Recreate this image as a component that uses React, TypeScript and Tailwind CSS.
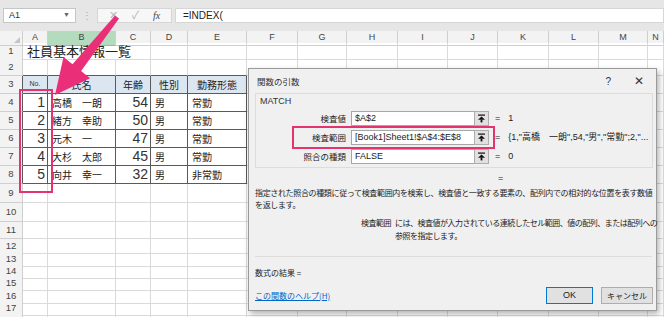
import React from "react";

const tpl =
  "grid grid-cols-[23px_25px_68px_35px_37px_59px_51px_49px_51px_50px_50px_51px_50px_49px_1fr]";

const colLetters = ["A", "B", "C", "D", "E", "F", "G", "H", "I", "J", "K", "L", "M", "N"];

const rows = [
  { n: 1, h: "h-[16px]" },
  { n: 2, h: "h-[17px]" },
  { n: 3, h: "h-[18px]" },
  { n: 4, h: "h-[18px]" },
  { n: 5, h: "h-[18px]" },
  { n: 6, h: "h-[18px]" },
  { n: 7, h: "h-[18px]" },
  { n: 8, h: "h-[18px]" },
  { n: 9, h: "h-[19px]" },
  { n: 10, h: "h-[19px]" },
  { n: 11, h: "h-[17px]" },
  { n: 12, h: "h-[13px]" },
  { n: 13, h: "h-[12px]" },
  { n: 14, h: "h-[12px]" },
  { n: 15, h: "h-[13px]" },
  { n: 16, h: "h-[12px]" },
  { n: 17, h: "h-[12px]" },
  { n: 18, h: "h-[12px]" },
];

const table: Record<number, string[]> = {
  3: ["No.", "氏名", "年齢", "性別", "勤務形態"],
  4: ["1", "高橋　一朗", "54", "男", "常勤"],
  5: ["2", "緒方　幸助", "50", "男", "常勤"],
  6: ["3", "元木　一", "47", "男", "常勤"],
  7: ["4", "大杉　太郎", "45", "男", "常勤"],
  8: ["5", "向井　幸一", "32", "男", "非常勤"],
};

const jp = "font-['Noto_Sans_CJK_JP',sans-serif]";
const lat = "font-['Liberation_Sans','Noto_Sans_CJK_JP',sans-serif]";

function Cell({ r, c }: { r: number; c: number }) {
  const data = table[r];
  if (data && c >= 1 && c <= 5) {
    const v = data[c - 1];
    if (r === 3) {
      return (
        <div className="bg-[#dce6f1] border-r border-b border-[#5a5a5a] flex items-center justify-center">
          {c === 1 ? (
            <span className={`${lat} text-[7px] text-[#333]`}>{v}</span>
          ) : (
            <span className={`${jp} text-[10px] text-[#222]`}>{v}</span>
          )}
        </div>
      );
    }
    const right = c === 1 || c === 3;
    return (
      <div
        className={`border-r border-b border-[#5a5a5a] flex items-end pb-[1px] ${
          right ? "justify-end pr-[2px]" : "pl-[4px]"
        }`}
      >
        {right ? (
          <span className={`${lat} text-[14px] leading-[15px] text-[#333]`}>{v}</span>
        ) : (
          <span className={`${jp} text-[10px] leading-[14px] text-[#222] whitespace-pre`}>{v}</span>
        )}
      </div>
    );
  }
  if (r === 1 && c === 1) {
    return (
      <div className="border-b border-[#dadada] flex items-end pl-[4px] pb-[1px] whitespace-nowrap">
        <span className={`${jp} text-[13px] leading-[15px] text-[#222]`}>社員基本情報一覧</span>
      </div>
    );
  }
  if (r === 1 && c === 2) {
    return <div className="border-b border-[#dadada]" />;
  }
  if (r === 2 && c >= 1 && c <= 5) {
    return <div className="border-r border-b border-r-[#dadada] border-b-[#5a5a5a]" />;
  }
  return <div className="border-r border-b border-[#dadada]" />;
}

function UpBtn() {
  return (
    <div className="w-[15px] h-[15px] -ml-px bg-[#e1e1e1] border border-[#adadad] flex items-center justify-center">
      <svg width="9" height="9" viewBox="0 0 9 9">
        <rect x="1" y="0.5" width="7" height="1.2" fill="#111" />
        <polygon points="4.5,2.6 8,5.8 1,5.8" fill="#111" />
        <rect x="3.6" y="5.6" width="1.8" height="2.8" fill="#111" />
      </svg>
    </div>
  );
}

function ArgRow({ label, value, result }: { label: string; value: string; result: string }) {
  return (
    <div className="flex items-center h-[15px]">
      <div className={`${jp} w-[90px] text-right text-[8.5px] text-[#222]`}>{label}</div>
      <div className={`${lat} ml-[5px] w-[124px] h-[15px] bg-white border border-[#a6a6a6] flex items-center px-[3px] text-[9px] text-[#222] whitespace-nowrap`}>
        {value}
      </div>
      <UpBtn />
      <div className={`${lat} ml-[6px] text-[9px] text-[#222] whitespace-nowrap`}>=</div>
      <div className={`${lat} ml-[8px] text-[9px] text-[#222] whitespace-nowrap`}>{result}</div>
    </div>
  );
}

export default function App() {
  return (
    <div className="relative w-[664px] h-[317px] overflow-hidden bg-white">
      {/* formula bar */}
      <div className="h-[31px] bg-[#e6e6e6] flex items-start pt-[8px]">
        <div className={`${lat} ml-[3px] w-[73px] h-[15px] bg-white border border-[#c6c6c6] flex items-center justify-between px-[5px] text-[9px] text-[#333]`}>
          <span>A1</span>
          <span className="text-[7px] text-[#666]">▼</span>
        </div>
        <div className="w-[21px] h-[15px] flex items-center justify-center text-[10px] text-[#aaa]">⋮</div>
        <div className="w-[75px] h-[15px] bg-[#f7f7f7] border border-[#d6d6d6] flex items-center justify-around px-[4px] text-[#b5b5b5]">
          <span className={`${lat} text-[11px]`}>✕</span>
          <span className={`${lat} text-[11px]`}>✓</span>
          <span className="font-['Liberation_Serif',serif] italic text-[10px] text-[#444]">fx</span>
        </div>
        <div className={`${lat} ml-[3px] flex-1 h-[15px] bg-white border border-[#d6d6d6] flex items-center pl-[7px] text-[10px] text-[#222]`}>
          =INDEX(
        </div>
      </div>

      {/* column headers */}
      <div className={`${tpl} h-[12px] bg-[#f3f3f3]`}>
        <div className="relative border-r border-b border-[#cfcfcf]">
          <div className="absolute right-[2px] bottom-[2px] w-0 h-0 border-l-[6px] border-l-transparent border-b-[6px] border-b-[#c4c4c4]" />
        </div>
        {colLetters.map((l) => (
          <div
            key={l}
            className={`${lat} flex items-center justify-center text-[9px] text-[#444] border-r border-b ${
              l === "B" ? "bg-[#b5dbbf] border-r-[#cfcfcf] border-b-[#8cc09b]" : "border-[#cfcfcf]"
            }`}
          >
            {l}
          </div>
        ))}
      </div>

      {/* rows */}
      {rows.map((row) => (
        <div key={row.n} className={`${tpl} ${row.h}`}>
          <div
            className={`${lat} bg-[#f3f3f3] border-b border-r flex items-center justify-center text-[9.5px] text-[#444] ${
              row.n >= 3 && row.n <= 8 ? "border-b-[#cfcfcf] border-r-[#5a5a5a]" : "border-[#cfcfcf]"
            }`}
          >
            {row.n < 18 ? row.n : ""}
          </div>
          {colLetters.map((_, i) => (
            <Cell key={i} r={row.n} c={i + 1} />
          ))}
        </div>
      ))}

      {/* red box on column A */}
      <div className="absolute left-[19px] top-[89px] w-[34px] h-[104px] border-[2.5px] border-[#e5336f]" />

      {/* pink arrow */}
      <svg className="absolute left-0 top-0 pointer-events-none" width="664" height="317" viewBox="0 0 664 317">
        <polygon
          points="115,15.4 119,18.6 81.1,71 90.1,78.2 55,95 63.5,57 72.5,64.2"
          fill="#ea2f78"
        />
      </svg>

      {/* function arguments dialog */}
      <div className="absolute left-[248px] top-[68px] w-[409px] h-[243px] bg-[#f0f0f0] border border-[#9a9a9a] shadow-[2px_3px_6px_rgba(0,0,0,0.3)] flex flex-col">
        <div className="h-[24px] flex items-center pl-[8px] pr-[12px]">
          <span className={`${jp} text-[8.5px] text-[#333]`}>関数の引数</span>
          <span className={`${lat} ml-auto text-[10px] text-[#333]`}>?</span>
          <span className={`${lat} ml-[23px] text-[12px] text-[#333]`}>✕</span>
        </div>

        <div className="ml-[6px] mr-[3px] h-[75px] border border-[#dcdcdc] flex flex-col">
          <div className={`${lat} h-[14px] leading-[14px] pl-[4px] text-[9px] text-[#333]`}>MATCH</div>
          <div className="mt-[3px] flex flex-col gap-[4px]">
            <ArgRow label="検査値" value="$A$2" result="1" />
            <ArgRow label="検査範囲" value="[Book1]Sheet1!$A$4:$E$8" result={'{1,"高橋　一朗",54,"男","常勤";2,"...'} />
            <ArgRow label="照合の種類" value="FALSE" result="0" />
          </div>
        </div>

        <div className={`${lat} mt-[4px] h-[12px] leading-[12px] pl-[249px] text-[9px] text-[#222]`}>=</div>

        <div className={`${jp} mt-[3px] pl-[6px] text-[8px] leading-[12px] tracking-[-0.35px] text-[#222]`}>
          <div className="whitespace-nowrap">
            指定された照合の種類に従って検査範囲内を検索し、検査値と一致する要素の、配列内での相対的な位置を表す数値
          </div>
          <div>を返します。</div>
        </div>

        <div className={`${jp} mt-[5px] flex text-[8px] leading-[13px] tracking-[-0.5px] text-[#222]`}>
          <div className="w-[146px] text-right pr-[4px]">検査範囲</div>
          <div className="w-[255px]">
            <div className="whitespace-nowrap">には、検査値が入力されている連続したセル範囲、値の配列、または配列への</div>
            <div>参照を指定します。</div>
          </div>
        </div>

        <div className="mt-[14px] ml-[6px] mr-[4px] border-t border-[#dcdcdc]" />

        <div className={`${jp} mt-[10px] pl-[6px] text-[8px] leading-[12px] text-[#222]`}>数式の結果 =</div>

        <div className="mt-[8px] flex items-center pl-[6px] pr-[3px]">
          <span className={`${jp} text-[8px] text-[#0066cc] underline`}>この関数のヘルプ(H)</span>
          <div className={`${lat} ml-auto w-[47px] h-[17px] bg-[#e1e1e1] border border-[#0078d7] flex items-center justify-center text-[9px] text-[#222]`}>
            OK
          </div>
          <div className={`${jp} ml-[8px] w-[52px] h-[17px] bg-[#e1e1e1] border border-[#adadad] flex items-center justify-center text-[8px] text-[#222]`}>
            キャンセル
          </div>
        </div>
      </div>

      {/* red box on 検査範囲 */}
      <div className="absolute left-[292px] top-[126px] w-[203px] h-[23px] border-[2.5px] border-[#e5336f]" />
    </div>
  );
}
